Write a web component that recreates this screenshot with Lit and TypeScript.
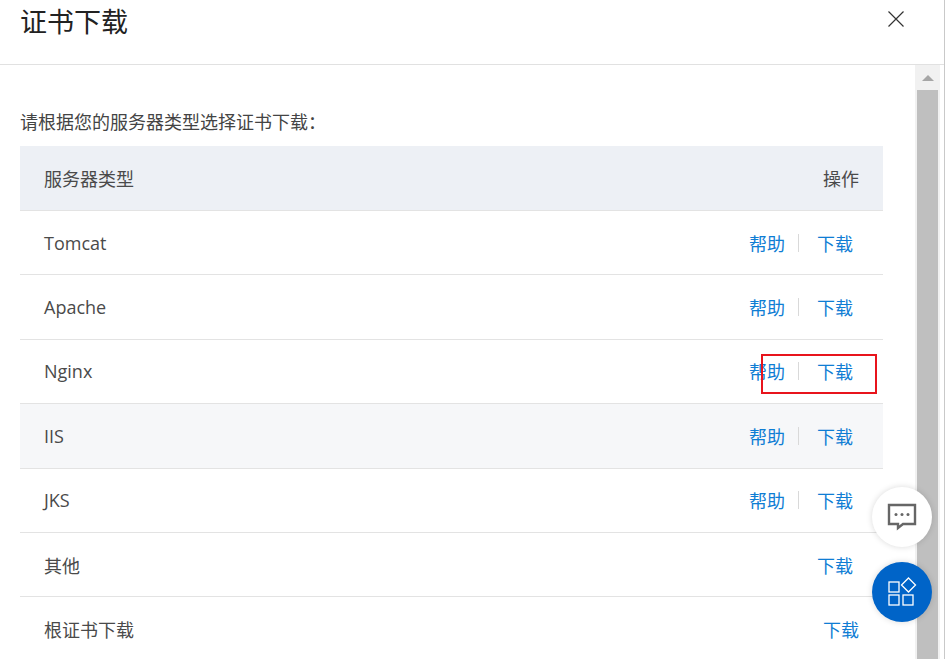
import { LitElement, html, css, svg } from "lit";
import { customElement } from "lit/decorators.js";

const rows = [
  { name: "Tomcat", help: true },
  { name: "Apache", help: true },
  { name: "Nginx", help: true, marked: true },
  { name: "IIS", help: true, hover: true },
  { name: "JKS", help: true },
  { name: "其他", help: false },
  { name: "根证书下载", help: false, root: true },
];

@customElement("app-root")
export class AppRoot extends LitElement {
  static styles = css`
    :host {
      display: block;
      position: relative;
      width: 947px;
      height: 659px;
      overflow: hidden;
      background: #fff;
      font-family: "Open Sans", "Noto Sans CJK SC", sans-serif;
      color: #333;
    }
    .modal { display: flex; flex-direction: column; width: 945px; height: 659px; border-right: 1px solid #c9c9c9; box-sizing: border-box; }
    .head {
      flex: none; height: 65px; box-sizing: border-box; border-bottom: 1px solid #e1e1e1;
      display: flex; justify-content: space-between; padding: 0 40px 0 20px;
    }
    .title { font-size: 27px; line-height: 43px; color: #222; }
    .close { margin-top: 11px; width: 16px; height: 16px; }
    .body { flex: 1; display: flex; min-height: 0; }
    .content { flex: none; width: 863px; padding: 0 0 0 20px; overflow: hidden; }
    .intro { font-size: 18px; line-height: 24px; margin-top: 45px; height: 36px; color: #444; }
    .row {
      display: flex; align-items: center; justify-content: space-between;
      height: 64.4px; box-sizing: border-box; border-bottom: 1px solid #e3e3e3;
      font-size: 18px; padding: 0 24px; color: #4a4a4a;
    }
    .row.th { background: #edf0f5; height: 65px; color: #4a4a4a; }
    .row.hover { background: #f6f7f9; }
    .ops { display: flex; align-items: center; position: relative; }
    .link { color: #0f7dd4; }
    .sep { width: 1px; height: 18px; background: #d9d9d9; margin: 0 18px 0 13px; }
    .ops { padding-right: 6px; }
    .ops.root { padding-right: 0; }
    .mark {
      position: absolute; left: 12px; right: -18px; top: -4px; height: 40px;
      box-sizing: border-box; border: 2px solid #e8141c; pointer-events: none;
    }
    .scroll { flex: none; width: 25px; margin-left: 32px; background: #f1f1f1; display: flex; flex-direction: column; align-items: center; }
    .up { flex: none; height: 25px; display: flex; align-items: center; justify-content: center; }
    .thumb { flex: 1; width: 21px; background: #bfbfbf; }
    .fab {
      position: absolute; left: 872px; width: 60px; height: 60px; border-radius: 50%;
      display: flex; align-items: center; justify-content: center;
      box-shadow: 0 0 6px rgba(0, 0, 0, 0.15);
    }
    .fab.chat { top: 487px; background: #fff; }
    .fab.apps { top: 562px; background: #0064c8; }
  `;

  render() {
    return html`
      <div class="modal">
        <div class="head">
          <div class="title">证书下载</div>
          <svg class="close" viewBox="0 0 16 16" fill="none" stroke="#333" stroke-width="1.2">
            <path d="M.5.5l15 15M15.5.5l-15 15" />
          </svg>
        </div>
        <div class="body">
          <div class="content">
            <div class="intro">请根据您的服务器类型选择证书下载：</div>
            <div class="row th"><span>服务器类型</span><span>操作</span></div>
            ${rows.map(
              (r) => html`
                <div class="row ${r.hover ? "hover" : ""}">
                  <span>${r.name}</span>
                  <div class="ops ${r.root ? "root" : ""}">
                    ${r.help ? html`<span class="link">帮助</span><span class="sep"></span>` : ""}
                    <span class="link">下载</span>
                    ${r.marked ? html`<div class="mark"></div>` : ""}
                  </div>
                </div>
              `
            )}
          </div>
          <div class="scroll">
            <div class="up">
              <svg width="14" height="8" viewBox="0 0 14 8"><path d="M7 1l6 6H1z" fill="#a6a6a6" /></svg>
            </div>
            <div class="thumb"></div>
          </div>
        </div>
      </div>
      <div class="fab chat">
        <svg width="32" height="28" viewBox="0 0 32 28" fill="none">
          <path d="M3 2h26v19H17l-5 4v-4H3z" stroke="#666" stroke-width="2.4" />
          <circle cx="10" cy="11.500" r="1.500" fill="#666" />
          <circle cx="16" cy="11.500" r="1.500" fill="#666" />
          <circle cx="22" cy="11.500" r="1.500" fill="#666" />
        </svg>
      </div>
      <div class="fab apps">
        <svg width="30" height="30" viewBox="0 0 30 30" fill="none" stroke="#fff" stroke-width="1.300">
          <rect x="2" y="5" width="10" height="10" />
          <rect x="2" y="18" width="10" height="10" />
          <rect x="16" y="18" width="10" height="10" />
          <path d="M21.500 1l7 7-7 7-7-7z" />
        </svg>
      </div>
    `;
  }
}
